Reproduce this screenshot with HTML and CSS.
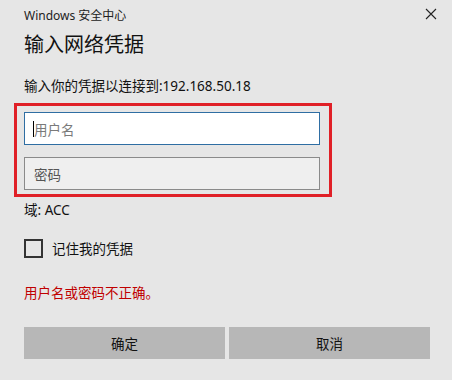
FILE: index.html
```html
<!DOCTYPE html>
<html lang="zh-CN">
<head>
<meta charset="utf-8">
<link rel="stylesheet" href="styles.css">
</head>
<body>
<div class="dialog">
  <div class="titlebar">
    <span class="app">Windows 安全中心</span>
    <span class="close">
      <svg width="12" height="12" viewBox="0 0 12 12"><path d="M1 1 L11 11 M11 1 L1 11" stroke="#222" stroke-width="1.1" fill="none"/></svg>
    </span>
  </div>
  <h1 class="title">输入网络凭据</h1>
  <p class="prompt">输入你的凭据以连接到:192.168.50.18</p>
  <div class="fields">
    <div class="input active"><span class="caret"></span><span class="ph">用户名</span></div>
    <div class="input pwd"><span class="ph dark">密码</span></div>
  </div>
  <p class="domain">域: ACC</p>
  <label class="remember"><span class="box"></span><span>记住我的凭据</span></label>
  <p class="error">用户名或密码不正确。</p>
  <div class="buttons">
    <div class="btn">确定</div>
    <div class="btn">取消</div>
  </div>
</div>
</body>
</html>
```
FILE: styles.css
```css
html, body {
  margin: 0;
  padding: 0;
  background: #e6e6e6;
}
body {
  font-family: "Noto Sans", "Noto Sans CJK SC", sans-serif;
  color: #000;
  width: 452px;
  height: 380px;
  overflow: hidden;
}
.dialog {
  padding: 0 22px 0 24px;
}
.titlebar {
  display: flex;
  justify-content: space-between;
  align-items: center;
  height: 28px;
}
.app {
  font-size: 12px;
  color: #222;
  padding-top: 1px;
}
.close {
  display: flex;
  width: 12px;
  height: 12px;
  margin-right: -7px;
}
.title {
  margin: 3px 0 0 0;
  font-size: 20px;
  font-weight: normal;
  line-height: 28px;
  color: #111;
}
.prompt {
  margin: 17px 0 0 0;
  font-size: 13.5px;
  line-height: 20px;
  color: #111;
}
.fields {
  position: relative;
  margin-top: 16px;
  width: 296px;
  display: flex;
  flex-direction: column;
  gap: 12px;
}
.fields::after {
  content: "";
  position: absolute;
  left: -10px;
  top: -9px;
  right: -12px;
  bottom: -7px;
  border: 3px solid #e02027;
  pointer-events: none;
}
.input {
  box-sizing: border-box;
  height: 33px;
  border: 1px solid #8a8a8a;
  background: #efefef;
  display: flex;
  align-items: center;
  padding-left: 9px;
  font-size: 13.5px;
  position: relative;
}
.input.active {
  background: #fff;
  border-color: #2f6ea3;
}
.caret {
  position: absolute;
  left: 8px;
  top: 8px;
  width: 1px;
  height: 16px;
  background: #000;
}
.ph {
  color: #7a7a7a;
}
.ph.dark {
  color: #555;
}
.domain {
  margin: 10px 0 0 0;
  font-size: 13.5px;
  line-height: 20px;
  color: #111;
}
.remember {
  display: flex;
  align-items: center;
  gap: 9px;
  margin-top: 18px;
  font-size: 13.5px;
  color: #111;
}
.box {
  box-sizing: border-box;
  width: 19px;
  height: 19px;
  border: 2px solid #333;
}
.error {
  margin: 25px 0 0 0;
  font-size: 13.5px;
  line-height: 20px;
  color: #c00000;
}
.buttons {
  margin-top: 24px;
  display: flex;
  gap: 4px;
}
.btn {
  flex: 1;
  height: 32px;
  background: #b7b7b7;
  display: flex;
  align-items: center;
  justify-content: center;
  font-size: 13.5px;
  color: #111;
}
```
